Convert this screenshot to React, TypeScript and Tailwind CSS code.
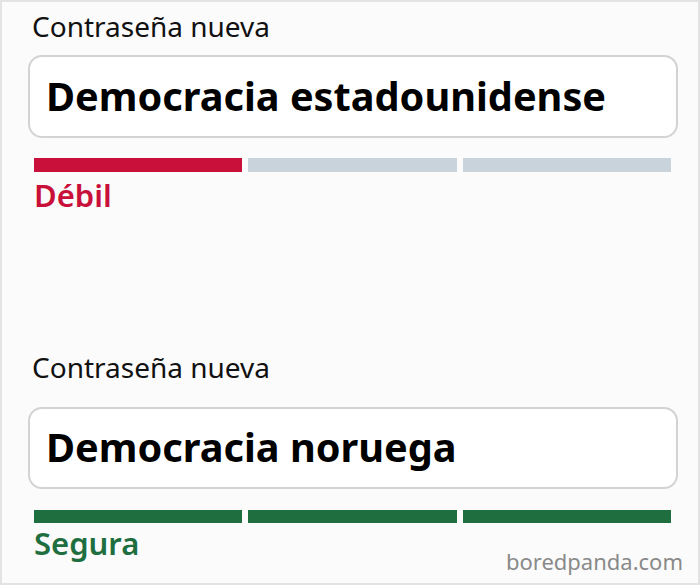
import React from "react";

const font = { fontFamily: '"Noto Sans", "Open Sans", sans-serif' };

function Bars({ filled, color, h }: { filled: number; color: string; h: string }) {
  return (
    <div className={`ml-[32px] mr-[27px] ${h} shrink-0 flex gap-[6px]`}>
      {[0, 1, 2].map((i) => (
        <div key={i} className={`flex-1 ${i < filled ? color : "bg-[#c9d3db]"}`} />
      ))}
    </div>
  );
}

export default function App() {
  return (
    <div
      className="w-[700px] h-[585px] border-2 border-[#e3e3e3] bg-[#fbfbfb] pt-[8px] flex flex-col overflow-hidden"
      style={font}
    >
      {/* Section 1 */}
      <div className="pl-[30px] text-[28px] leading-[32px] text-[#111]">Contraseña nueva</div>
      <div className="mt-[13px] ml-[26px] mr-[20px] h-[83px] shrink-0 rounded-[14px] border-2 border-[#d3d3d6] bg-white flex items-center pl-[16px]">
        <span className="text-[39.7px] font-bold leading-none text-black">Democracia estadounidense</span>
      </div>
      <div className="mt-[20px]">
        <Bars filled={1} color="bg-[#c8103a]" h="h-[14px]" />
      </div>
      <div className="mt-[5px] pl-[32px] text-[31px] font-semibold leading-[36px] text-[#c8103a]">Débil</div>

      {/* Section 2 */}
      <div className="mt-[138px] pl-[30px] text-[28px] leading-[32px] text-[#111]">Contraseña nueva</div>
      <div className="mt-[24px] ml-[26px] mr-[20px] h-[82px] shrink-0 rounded-[14px] border-2 border-[#d3d3d6] bg-white flex items-center pl-[16px]">
        <span className="text-[39.7px] font-bold leading-none text-black">Democracia noruega</span>
      </div>
      <div className="mt-[21px]">
        <Bars filled={3} color="bg-[#1e6e40]" h="h-[13px]" />
      </div>
      <div className="mt-[2px] flex items-start justify-between pl-[32px] pr-[15px]">
        <span className="text-[31px] font-semibold leading-[36px] text-[#1e6e40]">Segura</span>
        <span className="mt-[23px] text-[22px] leading-[26px] text-[#8a8a8a]">boredpanda.com</span>
      </div>
    </div>
  );
}
